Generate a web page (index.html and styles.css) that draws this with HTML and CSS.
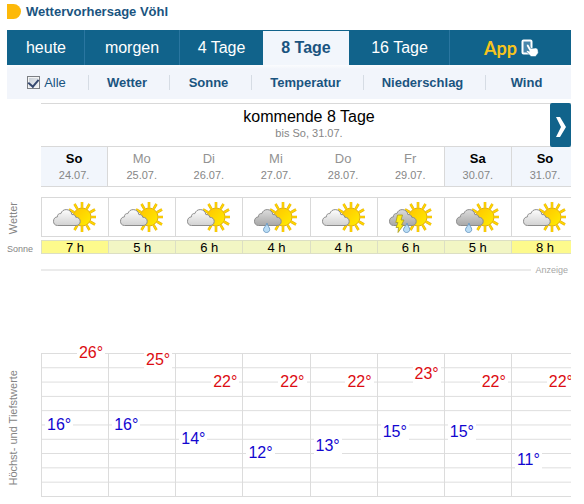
FILE: index.html
```html
<!DOCTYPE html>
<html lang="de">
<head>
<meta charset="utf-8">
<title>Wettervorhersage Vöhl</title>
<link rel="stylesheet" href="styles.css">
</head>
<body>
<svg class="defs" aria-hidden="true">
  <defs>
    <linearGradient id="g-sun" x1="0" y1="0" x2="1" y2="1">
      <stop offset="0" stop-color="#ffc400"/><stop offset="1" stop-color="#ffee00"/>
    </linearGradient>
    <linearGradient id="g-light" x1="0" y1="0" x2="0" y2="1">
      <stop offset="0" stop-color="#fdfdfd"/><stop offset="1" stop-color="#d2d2d2"/>
    </linearGradient>
    <linearGradient id="g-dark" x1="0" y1="0" x2="0" y2="1">
      <stop offset="0" stop-color="#dcdcdc"/><stop offset="1" stop-color="#a8a8a8"/>
    </linearGradient>
    <path id="rays" d="M30 7V1M30 25v6M21 16h-6M39 16h5M34.500 8.200l3-5.200M37.800 11.500l5.200-3M37.800 20.500l5.200 3M34.500 23.800l3 5.200M25.500 23.800l-3 5.200M25.500 8.200l-3-5.200M22.200 11.500l-5.200-3" fill="none"/>
    <g id="sun">
      <use href="#rays" stroke="#e0ae10" stroke-width="2.600"/>
      <circle cx="30" cy="16" r="9" fill="url(#g-sun)" stroke="#e0ae10" stroke-width="1"/>
      <use href="#rays" stroke="#ffd500" stroke-width="1.600"/>
    </g>
    <path id="cloud" d="M5.500 24.500C2.800 24.500 1.500 22.500 1.500 20.300C1.500 17.700 3 16 5.500 15.800C5.300 13.600 6.800 12.300 8.800 12.600C9.800 10 11.600 8.600 14.200 8.600C17.200 8.600 19.500 10.500 19.900 13.600C22 13.300 23.500 14.300 23.700 16.200C26.500 16.300 28.300 18 28.200 20.500C28.100 23 26.500 24.500 24 24.500Z" stroke="#8c8c8c" stroke-width="1"/>
    <path id="drop" d="M14 22C13.300 25 10.500 26.500 10.500 28.600C10.500 30.400 11.900 31.500 13.500 31.500C15.400 31.500 16.700 30.200 16.700 28.600C16.700 26.500 14.700 25 14 22Z" fill="#b9dcf5" stroke="#6f9cc4" stroke-width="1"/>
    <symbol id="w-fair" viewBox="0 0 46 32"><use href="#sun"/><use href="#cloud" fill="url(#g-light)"/></symbol>
    <symbol id="w-rain" viewBox="0 0 46 32"><use href="#sun"/><use href="#cloud" fill="url(#g-dark)"/><use href="#drop"/></symbol>
    <symbol id="w-storm" viewBox="0 0 46 32"><use href="#sun"/><use href="#cloud" fill="url(#g-dark)"/><use href="#drop" x="5"/>
      <path d="M9.500 14h5l-1.500 5h3l-2.500 5h2L10 31.500l.5-5H8l2-5H7.800Z" fill="#ffee11" stroke="#a89a20" stroke-width=".8"/></symbol>
  </defs>
</svg>

<main class="page">
  <h1 class="heading"><span class="marker"></span>Wettervorhersage Vöhl</h1>

  <nav class="tabs">
    <a href="#heute">heute</a>
    <a href="#morgen">morgen</a>
    <a href="#tage4">4 Tage</a>
    <a href="#tage8" class="active" aria-current="page">8 Tage</a>
    <a href="#tage16">16 Tage</a>
    <a href="#app" class="app">App
      <svg width="18" height="18" viewBox="0 0 18 18" aria-hidden="true">
        <rect x="1.500" y="1.500" width="9" height="13" rx="1" fill="#4a87ac" stroke="#fff" stroke-width="2"/>
        <path d="M5.800 5.600C6.600 4.900 7.500 5.300 8 6.200L9.800 9.500L14.600 9C16 9 16.800 10 17 11.200L17.300 14L14.500 17.500H10L5.500 12.800C5 11.800 6 11.100 7 11.600L8.400 12.200L5.600 7.200C5.300 6.500 5.400 6 5.800 5.600Z" fill="#fff" stroke="#11638b" stroke-width=".5"/>
      </svg>
    </a>
  </nav>

  <nav class="filters">
    <label><input type="checkbox" checked>Alle</label>
    <a href="#wetter">Wetter</a>
    <a href="#sonne">Sonne</a>
    <a href="#temperatur">Temperatur</a>
    <a href="#niederschlag">Niederschlag</a>
    <a href="#wind">Wind</a>
  </nav>

  <header class="range">
    <h2>kommende 8 Tage</h2>
    <p>bis So, 31.07.</p>
    <button type="button" class="next" aria-label="weiter">
      <svg width="10" height="20" viewBox="0 0 10 20" aria-hidden="true"><path d="M0 0H4L10 10L4 20H0L5 10Z" fill="#fff"/></svg>
    </button>
  </header>

  <table class="forecast">
    <thead>
      <tr>
        <td class="label"></td>
        <th scope="col"><div class="day weekend first">So<small>24.07.</small></div></th>
        <th scope="col"><div class="day">Mo<small>25.07.</small></div></th>
        <th scope="col"><div class="day">Di<small>26.07.</small></div></th>
        <th scope="col"><div class="day">Mi<small>27.07.</small></div></th>
        <th scope="col"><div class="day">Do<small>28.07.</small></div></th>
        <th scope="col"><div class="day">Fr<small>29.07.</small></div></th>
        <th scope="col"><div class="day weekend">Sa<small>30.07.</small></div></th>
        <th scope="col"><div class="day weekend">So<small>31.07.</small></div></th>
      </tr>
    </thead>
    <tbody>
      <tr>
        <th scope="row" class="label"><span class="vertical">Wetter</span></th>
        <td><div class="sky"><svg><use href="#w-fair"/></svg></div></td>
        <td><div class="sky"><svg><use href="#w-fair"/></svg></div></td>
        <td><div class="sky"><svg><use href="#w-fair"/></svg></div></td>
        <td><div class="sky"><svg><use href="#w-rain"/></svg></div></td>
        <td><div class="sky"><svg><use href="#w-fair"/></svg></div></td>
        <td><div class="sky"><svg><use href="#w-storm"/></svg></div></td>
        <td><div class="sky"><svg><use href="#w-rain"/></svg></div></td>
        <td><div class="sky"><svg><use href="#w-fair"/></svg></div></td>
      </tr>
      <tr>
        <th scope="row" class="label small">Sonne</th>
        <td><div class="hours bright">7 h</div></td>
        <td><div class="hours">5 h</div></td>
        <td><div class="hours">6 h</div></td>
        <td><div class="hours">4 h</div></td>
        <td><div class="hours">4 h</div></td>
        <td><div class="hours">6 h</div></td>
        <td><div class="hours">5 h</div></td>
        <td><div class="hours bright">8 h</div></td>
      </tr>
    </tbody>
  </table>

  <div class="ad">Anzeige</div>

  <table class="forecast temps">
    <tbody>
      <tr>
        <th scope="row" class="label"><span class="vertical">Höchst- und Tiefstwerte</span></th>
        <td><div class="scale"><span class="high" style="--t:26">26°</span><span class="low" style="--t:16">16°</span></div></td>
        <td><div class="scale"><span class="high" style="--t:25">25°</span><span class="low" style="--t:16">16°</span></div></td>
        <td><div class="scale"><span class="high" style="--t:22">22°</span><span class="low" style="--t:14">14°</span></div></td>
        <td><div class="scale"><span class="high" style="--t:22">22°</span><span class="low" style="--t:12">12°</span></div></td>
        <td><div class="scale"><span class="high" style="--t:22">22°</span><span class="low" style="--t:13">13°</span></div></td>
        <td><div class="scale"><span class="high" style="--t:23">23°</span><span class="low" style="--t:15">15°</span></div></td>
        <td><div class="scale"><span class="high" style="--t:22">22°</span><span class="low" style="--t:15">15°</span></div></td>
        <td><div class="scale"><span class="high" style="--t:22">22°</span><span class="low" style="--t:11">11°</span></div></td>
      </tr>
    </tbody>
  </table>
</main>
</body>
</html>
```
FILE: styles.css
```css
* { box-sizing: border-box; }

body {
  margin: 0;
  background: #fff;
  color: #000;
  font-family: "Liberation Sans", Arial, sans-serif;
  font-size: 13px;
}

a { color: inherit; text-decoration: none; }

.defs { position: absolute; width: 0; height: 0; }

.page {
  margin: 4px 13px 0 7px;
  overflow: hidden;
}

.heading {
  display: flex;
  align-items: center;
  gap: 5px;
  margin: 0 0 11px;
  color: #1a5480;
  font-size: 13px;
  line-height: 15px;
}

.marker {
  width: 14px;
  height: 15px;
  background: #fdb909;
  border-radius: 0 8px 8px 0;
}

.tabs {
  display: grid;
  grid-template-columns: 77fr 95fr 84fr 86fr 100fr 122fr;
  height: 35px;
  background: #11638b;
  color: #fff;
  font-size: 16px;
}

.tabs a {
  display: flex;
  align-items: center;
  justify-content: center;
  border-left: 1px solid #2a76a0;
}

.tabs a:first-child, .tabs .active, .tabs .active + a { border-left-color: transparent; }

.tabs .active {
  border-top: 1px solid #11638b;
  border-left: 0;
  background: #f2f6fc;
  color: #1a5480;
  font-weight: bold;
}

.tabs .app {
  gap: 4px;
  padding-left: 2px;
  color: #f7c41c;
  font-family: Lato, sans-serif;
  font-size: 18px;
  font-weight: bold;
}

.filters {
  display: grid;
  grid-template-columns: 81fr 81fr 82fr 112fr 122fr 86fr;
  align-items: center;
  height: 34px;
  background: linear-gradient(#fbfcfe, #f2f5fb 4px);
  color: #1a5480;
  font-weight: bold;
  text-align: center;
}

.filters a { padding-right: 4px; border-left: 1px solid #d6dce4; line-height: 15px; }

.filters label {
  display: flex;
  align-items: center;
  justify-content: center;
  gap: 4px;
  padding-right: 2px;
  font-weight: normal;
}

.filters input {
  appearance: none;
  display: grid;
  place-items: center;
  width: 13px;
  height: 13px;
  margin: 0;
  border: 1px solid #7c7f84;
  background: linear-gradient(135deg, #c4cbd4, #f4f6f8);
  box-shadow: inset 0 0 0 1px #f4f4f4;
}

.filters input:checked::after {
  content: "";
  width: 5px;
  height: 8px;
  border: solid #35486f;
  border-width: 0 2px 2px 0;
  transform: rotate(40deg);
}

.range {
  position: relative;
  height: 43px;
  margin: 4px 0 0 34px;
  padding: 4px 0 0 6px;
  border-top: 1px solid #d9d9d9;
  text-align: center;
}

.range h2 {
  margin: 0;
  font-size: 16px;
  font-weight: normal;
  line-height: 18px;
}

.range p {
  margin: 0;
  color: #868686;
  font-size: 11px;
  line-height: 15px;
}

.next {
  position: absolute;
  top: -1px;
  right: 0;
  display: grid;
  place-items: center;
  width: 21px;
  height: 44px;
  padding: 4px 0 0;
  border: 0;
  border-radius: 2px;
  background: #11638b;
}

/* The last column runs past the right edge and is clipped by .page */
.forecast {
  width: calc(100% + 7px);
  table-layout: fixed;
  border-spacing: 0;
}

.forecast th, .forecast td {
  padding: 0;
  font-weight: normal;
  text-align: center;
  vertical-align: top;
}

.forecast .label {
  width: 34px;
  color: #858585;
  font-size: 11px;
  text-align: left;
  vertical-align: middle;
}

.forecast .small { font-size: 9px; line-height: 14px; padding-top: 2px; }

.vertical {
  display: block;
  writing-mode: vertical-rl;
  transform: rotate(180deg);
  width: 12px;
  text-align: center;
  line-height: 12px;
  white-space: nowrap;
}

.day {
  height: 41px;
  margin-bottom: 10px;
  padding-top: 3px;
  border: solid #d9d9d9;
  border-width: 1px 0;
  color: #929292;
  line-height: 18px;
}

.day small {
  display: block;
  color: #868686;
  font-size: 11px;
  font-weight: normal;
  line-height: 15px;
}

.day.weekend {
  border-left-width: 1px;
  background: #f2f6fc;
  color: #000;
  font-weight: bold;
}

.day.first { border-left-width: 0; border-right-width: 1px; }

.sky {
  display: grid;
  place-items: center;
  height: 40px;
  margin-bottom: 3px;
  border: 1px solid #d9d9d9;
  border-right: 0;
}

.sky svg { width: 46px; height: 32px; }

.hours {
  height: 14px;
  border: 1px solid #dcdfc4;
  border-right: 0;
  background: #f2f6c4;
  line-height: 13px;
}

.hours.bright { background: #fdfa8c; }

.ad {
  display: flex;
  align-items: center;
  gap: 4px;
  margin: 8px 3px 0 34px;
  color: #a6a6a6;
  font-size: 9px;
  line-height: 12px;
}

.ad::before {
  content: "";
  flex: 1;
  height: 2px;
  background: #ebebeb;
}

.temps { margin-top: 67px; }

.temps td { padding: 10px 0 8px; }

.temps .label { padding-top: 8px; }

.scale {
  position: relative;
  height: 144px;
  border: solid #dcdcdc;
  border-width: 0 0 1px 1px;
  background: linear-gradient(#dcdcdc 1px, transparent 1px) 0 0 / 100% 10%;
}

.scale span {
  position: absolute;
  top: calc((26 - var(--t)) * 5%);
  padding: 0 2px;
  background: #fff;
  font-size: 16px;
  line-height: 18px;
  transform: translateY(-50%);
}

.high { right: 3px; color: #dc0c12; }

.low { left: 3px; color: #1206d0; }
```
